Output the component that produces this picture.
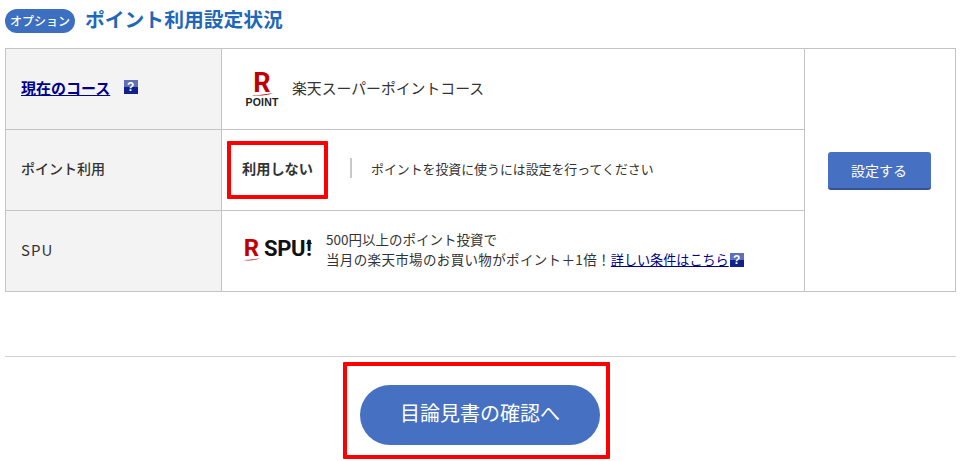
<script lang="ts">
  const notes = ['500円以上のポイント投資で', '当月の楽天市場のお買い物がポイント＋1倍！'];
</script>

<div class="page">
  <h2 class="title">
    <span class="badge">オプション</span>
    <span class="title-text">ポイント利用設定状況</span>
  </h2>

  <table class="status">
    <tbody>
      <tr>
        <th>
          <a href="#course" class="course">現在のコース</a>
          <span class="help course-help">?</span>
        </th>
        <td class="value">
          <div class="row">
            <span class="logo-point">
              <span class="r">R</span>
              <svg class="swoosh" viewBox="0 0 21 3" aria-hidden="true"><path d="M0 2.2C7 2.2 14 1.4 21 0C15 2.4 7 3.2 0 2.2Z" /></svg>
              <span class="point">POINT</span>
            </span>
            <span class="course-name">楽天スーパーポイントコース</span>
          </div>
        </td>
        <td class="action" rowspan="3">
          <button class="set">設定する</button>
        </td>
      </tr>
      <tr>
        <th class="plain">ポイント利用</th>
        <td class="value">
          <div class="row use">
            <strong class="use-label">利用しない</strong>
            <span class="sep"></span>
            <span class="use-note">ポイントを投資に使うには設定を行ってください</span>
            <span class="mark mark-use"></span>
          </div>
        </td>
      </tr>
      <tr>
        <th class="plain spu-head">SPU</th>
        <td class="value">
          <div class="row spu">
            <span class="logo-spu">
              <span class="r-wrap">
                <span class="r small">R</span>
                <svg class="swoosh small" viewBox="0 0 21 3" aria-hidden="true"><path d="M0 2.2C7 2.2 14 1.4 21 0C15 2.4 7 3.2 0 2.2Z" /></svg>
              </span>
              <span class="spu-text">SPU<span class="bang">!</span></span>
            </span>
            <div class="spu-note">
              <div>{notes[0]}</div>
              <div><span class="wide">{notes[1]}</span><a href="#detail">詳しい条件はこちら</a><span class="help">?</span></div>
            </div>
          </div>
        </td>
      </tr>
    </tbody>
  </table>

  <div class="footer">
    <div class="confirm-wrap">
      <button class="confirm">目論見書の確認へ</button>
      <span class="mark mark-confirm"></span>
    </div>
  </div>
</div>

<style>
  :global(body) {
    margin: 0;
    background: #fff;
  }
  .page {
    width: 962px;
    height: 461px;
    padding: 0 6px 0 5px;
    box-sizing: border-box;
    overflow: hidden;
    font-family: "Noto Sans CJK JP", "Liberation Sans", sans-serif;
    color: #333;
    font-size: 13.5px;
  }
  .title {
    height: 48px;
    margin: 0;
    display: flex;
    align-items: center;
    gap: 10px;
    padding-bottom: 7px;
    box-sizing: border-box;
    font-size: 19.8px;
    font-weight: 700;
    color: #1f68b9;
  }
  .title-text {
    padding-bottom: 4px;
  }
  .badge {
    width: 70px;
    height: 24px;
    border-radius: 12px;
    background: #3c6fbf;
    color: #fff;
    font-size: 12px;
    font-weight: 500;
    display: flex;
    align-items: center;
    justify-content: center;
    white-space: nowrap;
  }
  .status {
    width: 951px;
    table-layout: fixed;
    border-collapse: collapse;
  }
  .status th,
  .status td {
    border: 1px solid #c4c4c4;
    height: 80px;
    padding: 0;
    box-sizing: border-box;
  }
  .status tr {
    height: 81px;
  }
  .status td.value {
    padding-bottom: 4px;
  }
  .status th {
    width: 216px;
    background: #f3f3f3;
    text-align: left;
    padding: 0 0 4px 15px;
    font-weight: 700;
    font-size: 15px;
  }
  .status th.plain {
    font-size: 14px;
    font-weight: 500;
    color: #333;
  }
  .status th.spu-head {
    font-size: 15px;
    font-weight: 400;
    letter-spacing: 1px;
  }
  .status td.action {
    width: 151px;
    vertical-align: top;
    text-align: center;
    padding: 103px 2px 0 0;
  }
  .course {
    color: #00008b;
    font-weight: 700;
  }
  .help {
    display: inline-block;
    width: 14px;
    height: 14px;
    background: linear-gradient(#5f70b4 50%, #10208c 50%);
    color: #fff;
    font-family: "Liberation Sans", sans-serif;
    font-size: 12px;
    font-weight: 700;
    line-height: 14px;
    text-align: center;
    vertical-align: 1px;
  }
  .course-help {
    margin-left: 10px;
    vertical-align: 3px;
  }
  .row {
    position: relative;
    display: flex;
    align-items: center;
  }
  .logo-point {
    width: 40px;
    margin: 6px 0 0 20px;
    display: flex;
    flex-direction: column;
    align-items: center;
    font-family: "Liberation Sans", sans-serif;
  }
  .r {
    font-family: Roboto, "Liberation Sans", sans-serif;
    color: #bf0000;
    font-size: 27px;
    font-weight: 700;
    line-height: 19px;
  }
  .swoosh {
    display: block;
    width: 21px;
    height: 3px;
    fill: #bf0000;
  }
  .point {
    color: #222;
    font-size: 10.5px;
    font-weight: 700;
    line-height: 8px;
    margin-top: 2px;
    letter-spacing: 0.2px;
  }
  .course-name {
    margin-left: 10px;
    font-size: 14.85px;
    color: #333;
  }
  .use-label {
    margin-left: 20px;
    width: 85px;
    font-size: 14.2px;
    font-weight: 700;
    color: #333;
  }
  .sep {
    width: 2px;
    height: 20px;
    margin-left: 23px;
    background: #c8c8c8;
  }
  .use-note {
    margin-left: 19px;
    font-size: 12.9px;
  }
  .mark {
    position: absolute;
    box-sizing: border-box;
    border: 4px solid #f00;
    border-radius: 1px;
    pointer-events: none;
  }
  .mark-use {
    left: 5px;
    top: calc(50% - 27px);
    width: 101px;
    height: 58px;
  }
  .logo-spu {
    margin-left: 21px;
    width: 70px;
    flex: none;
    display: flex;
    align-items: center;
    gap: 4px;
    white-space: nowrap;
  }
  .r-wrap {
    display: flex;
    flex-direction: column;
    align-items: center;
    flex: none;
    width: 17px;
    margin-top: 3px;
  }
  .r.small {
    font-size: 24px;
    line-height: 17px;
  }
  .swoosh.small {
    width: 17px;
    height: 3px;
    margin-top: 1px;
  }
  .spu-text {
    flex: none;
    font-family: Roboto, "Liberation Sans", sans-serif;
    color: #111;
    font-size: 22px;
    font-weight: 700;
    line-height: 22px;
    letter-spacing: -0.4px;
  }
  .bang {
    position: relative;
    display: inline-block;
    margin-left: 1px;
  }
  .bang::before {
    content: "";
    position: absolute;
    left: 50%;
    top: 1px;
    margin-left: -3px;
    border-left: 3px solid transparent;
    border-right: 3px solid transparent;
    border-bottom: 5px solid #111;
  }
  .spu-note {
    margin-left: 13px;
    font-size: 13.5px;
    line-height: 20px;
    color: #333;
    white-space: nowrap;
  }
  .wide {
    letter-spacing: 0.35px;
  }
  .spu-note a {
    color: #00008b;
    font-size: 13.1px;
  }
  .spu-note .help {
    margin-left: 1px;
  }
  button {
    font-family: inherit;
    border: 0;
    color: #fff;
    background: #4670c2;
    padding: 0;
  }
  .set {
    width: 103px;
    height: 38px;
    border-radius: 3px;
    border-bottom: 2px solid #35548f;
    font-size: 14px;
  }
  .footer {
    margin-top: 64px;
    border-top: 1px solid #d2d2d2;
    display: flex;
    justify-content: center;
    padding-top: 28px;
  }
  .confirm-wrap {
    position: relative;
    margin-right: 1px;
  }
  .confirm {
    display: block;
    width: 240px;
    height: 60px;
    padding-bottom: 5px;
    border-radius: 30px;
    font-size: 20px;
  }
  .mark-confirm {
    left: -17px;
    top: -23px;
    width: 267px;
    height: 97px;
  }
</style>
